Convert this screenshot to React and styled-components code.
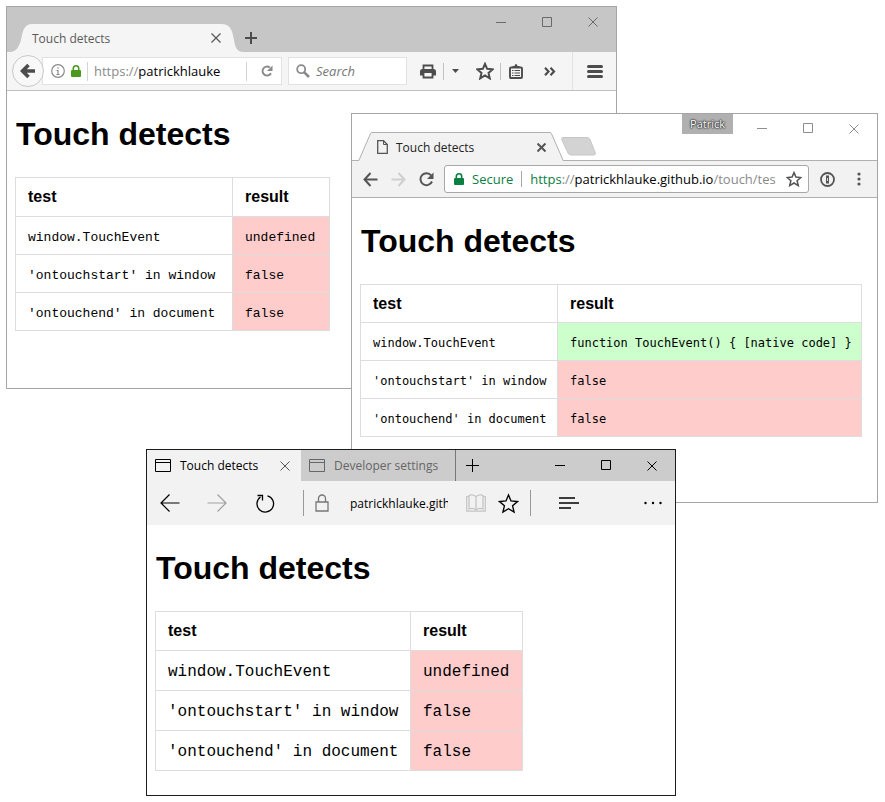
import React from "react";
import styled, { createGlobalStyle, css } from "styled-components";

const GlobalStyle = createGlobalStyle`
  * { box-sizing: border-box; }
  body { margin: 0; background: #fff; color: #000; font-family: "Open Sans", sans-serif; }
  svg { display: block; flex: none; }
`;

const Desktop = styled.main`
  position: relative;
  min-height: 100vh;
  overflow: hidden;
`;

const Frame = styled.section`
  position: absolute;
  left: ${(p) => p.$x}px;
  top: ${(p) => p.$y}px;
  width: ${(p) => p.$w}px;
  min-height: ${(p) => p.$h}px;
  border: 1px solid ${(p) => p.$edge};
  background: #fff;
`;

const IconButton = styled.button`
  display: flex;
  flex: none;
  align-items: center;
  justify-content: center;
  width: ${(p) => p.$w || 24}px;
  height: ${(p) => p.$h || 28}px;
  padding: 0;
  border: 0;
  background: none;
  color: ${(p) => p.$color || "inherit"};
`;

const Spacer = styled.div`
  flex: 1;
`;

const Divider = styled.span`
  flex: none;
  width: 1px;
  height: ${(p) => p.$h}px;
  margin: ${(p) => p.$m || "0"};
  background: ${(p) => p.$color};
`;

const TextInput = styled.input`
  min-width: 0;
  padding: 0;
  border: 0;
  outline: 0;
  background: none;
  color: #000;
  font: inherit;
  ${(p) => (p.$fit ? css`flex: none; field-sizing: content;` : css`flex: 1; width: 0;`)}
`;

const Controls = styled.div`
  display: flex;
  color: ${(p) => p.$color};
`;

/* ---------- page shown in every browser ---------- */

const Page = styled.div`
  padding: 25px 8px 16px;
`;

const Title = styled.h1`
  margin: 0 0 24px;
  padding-left: 1px;
  font: bold 32px/37px "Liberation Sans", sans-serif;
`;

const ResultTable = styled.table`
  border-collapse: collapse;
`;

const Head = styled.th`
  min-width: ${(p) => p.$min || 0}px;
  padding: 9px 12px;
  border: 1px solid #ddd;
  text-align: left;
  font: bold 16px/${(p) => p.$line}px "Liberation Sans", sans-serif;
`;

const tones = { pass: "#cfc", fail: "#fcc" };

const Cell = styled.td`
  padding: 11px 8px 7px 12px;
  border: 1px solid #ddd;
  background: ${(p) => tones[p.$tone] || "transparent"};
  font: ${(p) => p.$size}px/${(p) => p.$line}px ${(p) => p.$face}, monospace;
  white-space: nowrap;
`;

function TestPage({ touchEvent, tone, face, size, headLine, line, min }) {
  const rows = [
    ["window.TouchEvent", touchEvent, tone],
    ["'ontouchstart' in window", "false", "fail"],
    ["'ontouchend' in document", "false", "fail"],
  ];
  const text = { $face: face, $size: size, $line: line };
  return (
    <Page>
      <Title>Touch detects</Title>
      <ResultTable>
        <thead>
          <tr>
            <Head scope="col" $line={headLine} $min={min[0]}>test</Head>
            <Head scope="col" $line={headLine} $min={min[1]}>result</Head>
          </tr>
        </thead>
        <tbody>
          {rows.map(([test, result, kind]) => (
            <tr key={test}>
              <Cell {...text}>{test}</Cell>
              <Cell {...text} $tone={kind}>{result}</Cell>
            </tr>
          ))}
        </tbody>
      </ResultTable>
    </Page>
  );
}

/* ---------- shared drawings ---------- */

const Svg = ({ w, h = w, children, ...rest }) => (
  <svg width={w} height={h} viewBox={`0 0 ${w} ${h}`} fill="none" stroke="currentColor" aria-hidden="true" {...rest}>
    {children}
  </svg>
);

const MinimizeIcon = () => <Svg w={11}><path d="M0 5.500H10" /></Svg>;
const MaximizeIcon = () => <Svg w={11}><path d="M.5 .5H9.500V9.500H.5Z" /></Svg>;
const CloseIcon = ({ w = 11, sw = 1 }) => (
  <Svg w={w}><path strokeWidth={sw} d={`M.5 .5L${w - 0.5} ${w - 0.5}M${w - 0.5} .5L.5 ${w - 0.5}`} /></Svg>
);
const PadlockIcon = () => (
  <Svg w={10} h={12}>
    <path d="M2.300 6V3.500a2.700 2.700 0 0 1 5.400 0V6" strokeWidth="1.600" />
    <path d="M1 5H9Q10 5 10 6V11Q10 12 9 12H1Q0 12 0 11V6Q0 5 1 5Z" fill="currentColor" stroke="none" />
  </Svg>
);
const StarIcon = ({ w, sw }) => (
  <svg width={w} height={w} viewBox="0 0 20 20" fill="none" stroke="currentColor" strokeWidth={sw} aria-hidden="true">
    <path d="M10 2L12.400 7.600L18.500 8.200L13.900 12.200L15.300 18.200L10 15L4.700 18.200L6.100 12.200L1.500 8.200L7.600 7.600Z" />
  </svg>
);

function WindowControls({ color, h }) {
  return (
    <Controls $color={color}>
      <IconButton $w={46} $h={h} aria-label="Minimize"><MinimizeIcon /></IconButton>
      <IconButton $w={46} $h={h} aria-label="Maximize"><MaximizeIcon /></IconButton>
      <IconButton $w={46} $h={h} aria-label="Close window"><CloseIcon w={10} /></IconButton>
    </Controls>
  );
}

/* ---------- Firefox ---------- */

const FoxTitleBar = styled.header`
  display: flex;
  height: 45px;
  background: #c6c6c6;
`;

const FoxTab = styled.div`
  display: flex;
  align-self: flex-end;
  height: 28px;
  color: #f5f5f5;
`;

const FoxTabBody = styled.div`
  display: flex;
  align-items: center;
  justify-content: space-between;
  width: 189px;
  background: #f5f5f5;
  color: #5a5a5a;
  font-size: 12px;
`;

const FoxToolbar = styled.div`
  display: flex;
  align-items: center;
  height: 39px;
  padding: 0 9px 0 5px;
  border-bottom: 1px solid #c0c0c0;
  background: #f5f5f5;
  color: #4c4c4c;
`;

const FoxBack = styled.button`
  z-index: 1;
  display: flex;
  flex: none;
  align-items: center;
  justify-content: center;
  width: 32px;
  height: 32px;
  padding: 0;
  border: 1px solid #c8c8c8;
  border-radius: 50%;
  background: #f8f8f8;
  color: #4c4c4c;
`;

const FoxField = styled.div`
  display: flex;
  flex: none;
  align-items: center;
  width: ${(p) => p.$w}px;
  height: 28px;
  margin-left: ${(p) => p.$ml}px;
  padding-left: ${(p) => p.$pl}px;
  border: 1px solid #e2e2e2;
  background: #fff;
  font-size: 13px;
  gap: 6px;
  color: #8a8a8a;

  input::placeholder { color: #777; font-style: italic; opacity: 1; }
`;

const UrlText = styled.label`
  display: flex;
  flex: 1;
  min-width: 0;
  align-items: center;
  overflow: hidden;
  white-space: nowrap;
  color: #8a8a8a;
`;

const Tint = styled.span`
  color: ${(p) => p.$color};
`;

const FoxTools = styled.div`
  display: flex;
  flex: 1;
  align-items: center;
  justify-content: space-between;
  margin-left: 9px;
`;

const FoxToolGroup = styled.div`
  display: flex;
  align-items: center;
  gap: 3px;
`;

function Firefox() {
  return (
    <Frame $x={6} $y={6} $w={611} $h={383} $edge="#a5a5a5" aria-label="Firefox">
      <FoxTitleBar>
        <FoxTab>
          <Svg w={25} h={28}><path fill="currentColor" stroke="none" d="M0 28H3C9 28 12 23 14 16C16 5 18 0 25 0V28Z" /></Svg>
          <FoxTabBody>
            Touch detects
            <IconButton $w={10} aria-label="Close tab"><CloseIcon w={10} sw={1.3} /></IconButton>
          </FoxTabBody>
          <Svg w={25} h={28}><path fill="currentColor" stroke="none" d="M25 28H22C16 28 14 23 13 16C11 5 9 0 0 0V28Z" /></Svg>
          <IconButton $w={10} $color="#4c4c4c" aria-label="New tab">
            <Svg w={12}><path d="M6 0V12M0 6H12" strokeWidth="2" /></Svg>
          </IconButton>
        </FoxTab>
        <Spacer />
        <WindowControls color="#6a6a6a" h={30} />
      </FoxTitleBar>
      <FoxToolbar>
        <FoxBack aria-label="Back">
          <Svg w={16}><path d="M8.500 2L2.500 8L8.500 14M3.500 8H15" strokeWidth="3.600" /></Svg>
        </FoxBack>
        <FoxField $w={240} $ml={-2} $pl={8}>
          <Svg w={14}>
            <circle cx="7" cy="7" r="6.300" strokeWidth="1.200" />
            <path d="M7 6V11M7 3.200V4.800M5.500 6.500H7M5.500 10.500H8.500" strokeWidth="1.200" />
          </Svg>
          <Tint $color="#4b9a20"><PadlockIcon /></Tint>
          <Divider $h={19} $color="#d5d5d5" />
          <UrlText>
            https://
            <TextInput defaultValue="patrickhlauke" aria-label="Firefox address" />
          </UrlText>
          <Divider $h={19} $color="#d5d5d5" />
          <IconButton $w={28} $h={24} aria-label="Reload">
            <Svg w={12}>
              <path d="M8.800 2.500A4.500 4.500 0 1 0 10 8.200" strokeWidth="1.900" />
              <path d="M11.500 .5V6H6Z" fill="currentColor" stroke="none" />
            </Svg>
          </IconButton>
        </FoxField>
        <FoxField $w={119} $ml={6} $pl={7}>
          <Svg w={14}>
            <circle cx="5.200" cy="5.200" r="4" strokeWidth="1.800" />
            <path d="M8.300 8.300L13 13" strokeWidth="2.600" />
          </Svg>
          <TextInput placeholder="Search" aria-label="Search" />
        </FoxField>
        <FoxTools>
          <FoxToolGroup>
            <IconButton aria-label="Print">
              <Svg w={16} h={15}>
                <path d="M3.500 6V1.500H12.500V6" strokeWidth="1.800" />
                <path d="M2.500 5H13.500Q16 5 16 7.500V11.500H13V9H3V11.500H0V7.500Q0 5 2.500 5Z" fill="currentColor" stroke="none" />
                <path d="M3.500 9V13.500H12.500V9" strokeWidth="1.800" />
              </Svg>
            </IconButton>
            <Divider $h={17} $color="#c4c4c4" />
            <IconButton $w={16} aria-label="Print options">
              <Svg w={7} h={4}><path d="M0 0H7L3.500 4Z" fill="currentColor" stroke="none" /></Svg>
            </IconButton>
          </FoxToolGroup>
          <FoxToolGroup>
            <IconButton aria-label="Bookmark this page"><StarIcon w={18} sw={2.2} /></IconButton>
            <Divider $h={17} $color="#c4c4c4" />
            <IconButton aria-label="Show bookmarks">
              <Svg w={14} h={15}>
                <path d="M2 3.500H12Q13 3.500 13 4.500V13Q13 14 12 14H2Q1 14 1 13V4.500Q1 3.500 2 3.500Z" strokeWidth="1.900" />
                <path d="M3.500 4V2H5.500Q6 0 7 0Q8 0 8.500 2H10.500V4Z" fill="currentColor" stroke="none" />
                <path d="M3 6.500H4.500M5.500 6.500H11M3 9H4.500M5.500 9H11M3 11.500H4.500M5.500 11.500H11" strokeWidth="1.200" />
              </Svg>
            </IconButton>
          </FoxToolGroup>
          <IconButton aria-label="More tools">
            <Svg w={12} h={9}><path d="M1 .8L4.500 4.500L1 8.200M6.500 .8L10 4.500L6.500 8.200" strokeWidth="2.200" /></Svg>
          </IconButton>
          <Divider $h={38} $color="#e2e2e2" />
          <IconButton aria-label="Open menu">
            <Svg w={16} h={13}><path d="M1.500 1.500H14.500M1.500 6.500H14.500M1.500 11.500H14.500" strokeWidth="3" strokeLinecap="round" /></Svg>
          </IconButton>
        </FoxTools>
      </FoxToolbar>
      <TestPage touchEvent="undefined" tone="fail" face='"Liberation Mono"' size={13} headLine={20} line={19} min={[217, 97]} />
    </Frame>
  );
}

/* ---------- Chrome ---------- */

const ChromeTitleBar = styled.header`
  display: flex;
  height: 47px;
  padding-left: 6px;
  border-bottom: 1px solid #b0b0b0;
`;

const ChromeTab = styled.div`
  display: flex;
  align-self: flex-end;
  height: 29px;
  margin-bottom: -1px;
`;

const ChromeTabBody = styled.div`
  display: flex;
  align-items: center;
  width: 178px;
  padding-left: 5px;
  border-top: 1px solid #b0b0b0;
  background: #f2f2f2;
  color: #222;
  font-size: 12px;
  gap: 8px;
`;

const ProfileBadge = styled.button`
  align-self: flex-start;
  height: 20px;
  margin-right: 6px;
  padding: 0 8px;
  border: 0;
  background: #b0b0b0;
  color: #fff;
  font: 11px/20px "Open Sans", sans-serif;
  text-shadow: 0 0 2px #222, 0 0 2px #222, 0 0 1px #222;
`;

const ChromeToolbar = styled.div`
  display: flex;
  align-items: center;
  height: 37px;
  padding: 0 4px;
  border-bottom: 1px solid #b0b0b0;
  background: #f2f2f2;
  color: #555;
`;

const Omnibox = styled.div`
  display: flex;
  flex: 1;
  align-items: center;
  height: 28px;
  min-width: 0;
  margin: 0 4px;
  padding: 0 7px 0 9px;
  border: 1px solid #a8a8a8;
  border-radius: 3px;
  background: #fff;
  color: #0b8043;
  font-size: 13px;
  gap: 8px;
`;

const ChromeActions = styled.div`
  display: flex;
  gap: 4px;
`;

function Chrome() {
  return (
    <Frame $x={351} $y={113} $w={527} $h={390} $edge="#a5a5a5" aria-label="Chrome">
      <ChromeTitleBar>
        <ChromeTab>
          <Svg w={14} h={29}>
            <path d="M0 29V28.500H1L13 .5H14V29Z" fill="#f2f2f2" stroke="none" />
            <path d="M0 28.500H.8L12.700 1.200Q13 .5 14 .5" stroke="#b0b0b0" />
          </Svg>
          <ChromeTabBody>
            <Svg w={11} h={14} stroke="#555">
              <path d="M.7 .7H6.500L10.300 4.500V13.300H.7Z" strokeWidth="1.300" />
              <path d="M6.500 .7V4.500H10.300" />
            </Svg>
            Touch detects
            <Spacer />
            <IconButton $w={18} $color="#555" aria-label="Close tab"><CloseIcon w={9} sw={2} /></IconButton>
          </ChromeTabBody>
          <Svg w={14} h={29}>
            <path d="M14 29V28.500H13L1 .5H0V29Z" fill="#f2f2f2" stroke="none" />
            <path d="M14 28.500H13.200L1.300 1.200Q1 .5 0 .5" stroke="#b0b0b0" />
          </Svg>
          <IconButton $w={30} aria-label="New tab">
            <Svg w={36} h={19}><path d="M2 .5H26Q28 .5 29 2.500L34 15Q35 18 33 18H10Q8 18 7 16L1 3Q0 .5 2 .5Z" fill="#d3d3d3" stroke="#c6c6c6" /></Svg>
          </IconButton>
        </ChromeTab>
        <Spacer />
        <ProfileBadge>Patrick</ProfileBadge>
        <WindowControls color="#8e8e8e" h={29} />
      </ChromeTitleBar>
      <ChromeToolbar>
        <IconButton $w={28} aria-label="Back">
          <Svg w={15}><path d="M7.500 1L1.500 7.500L7.500 14M1.500 7.500H14.500" strokeWidth="2" /></Svg>
        </IconButton>
        <IconButton $w={28} $color="#cfcfcf" aria-label="Forward">
          <Svg w={15}><path d="M7.500 1L13.500 7.500L7.500 14M13.500 7.500H.5" strokeWidth="2" /></Svg>
        </IconButton>
        <IconButton $w={28} aria-label="Reload">
          <Svg w={15}>
            <path d="M12.200 3.500A6 6 0 1 0 13 9.500" strokeWidth="2" />
            <path d="M14.500 .5V7H8Z" fill="currentColor" stroke="none" />
          </Svg>
        </IconButton>
        <Omnibox>
          <PadlockIcon />
          Secure
          <Divider $h={16} $color="#a8a8a8" />
          <UrlText>
            <Tint $color="#0b8043">https</Tint>://
            <TextInput $fit defaultValue="patrickhlauke.github.io" aria-label="Chrome address" />
            /touch/tes
          </UrlText>
          <IconButton $w={14} $color="#555" aria-label="Bookmark this page"><StarIcon w={16} sw={1.9} /></IconButton>
        </Omnibox>
        <ChromeActions>
          <IconButton $w={28} aria-label="1Password">
            <Svg w={15}>
              <circle cx="7.500" cy="7.500" r="6.500" strokeWidth="1.800" />
              <path d="M7.500 3.500V11.500" strokeWidth="3" />
              <path d="M7.500 6V9" stroke="#ddd" />
            </Svg>
          </IconButton>
          <IconButton $w={28} aria-label="Customize and control">
            <Svg w={4} h={14} fill="currentColor" stroke="none">
              <circle cx="2" cy="2" r="1.600" /><circle cx="2" cy="7" r="1.600" /><circle cx="2" cy="12" r="1.600" />
            </Svg>
          </IconButton>
        </ChromeActions>
      </ChromeToolbar>
      <TestPage
        touchEvent="function TouchEvent() { [native code] }"
        tone="pass"
        face='"DejaVu Sans Mono"'
        size={12}
        headLine={19}
        line={19}
        min={[197, 304]}
      />
    </Frame>
  );
}

/* ---------- Edge ---------- */

const EdgeTitleBar = styled.header`
  display: flex;
  height: 31px;
  background: #ccc;
`;

const EdgeTab = styled.div`
  display: flex;
  flex: none;
  align-items: center;
  width: ${(p) => (p.$active ? 154 : 155)}px;
  padding: 0 8px;
  border-right: ${(p) => (p.$active ? 0 : 1)}px solid #777;
  background: ${(p) => (p.$active ? "#f2f2f2" : "#ccc")};
  color: ${(p) => (p.$active ? "#000" : "#666")};
  font-size: 12px;
  gap: 9px;
  white-space: nowrap;
`;

const EdgeToolbar = styled.div`
  display: flex;
  align-items: center;
  height: 44px;
  padding-right: 6px;
  background: #f2f2f2;
  font-size: 12px;
`;

const EdgeAddress = styled.label`
  display: flex;
  flex: none;
  width: 98px;
  margin: 0 12px 0 10px;
  overflow: hidden;
`;

const TabPageIcon = () => (
  <Svg w={16} h={13}><path d="M.5 .5H15.500V12.500H.5ZM.5 3.500H15.500" /></Svg>
);

function Edge() {
  return (
    <Frame $x={146} $y={449} $w={530} $h={347} $edge="#1c1c1c" aria-label="Edge">
      <EdgeTitleBar>
        <EdgeTab $active>
          <TabPageIcon />
          Touch detects
          <Spacer />
          <IconButton $w={16} $color="#555" aria-label="Close tab"><CloseIcon w={10} /></IconButton>
        </EdgeTab>
        <EdgeTab>
          <TabPageIcon />
          Developer settings
        </EdgeTab>
        <IconButton $w={32} $h={31} aria-label="New tab">
          <Svg w={13}><path d="M6.500 0V13M0 6.500H13" /></Svg>
        </IconButton>
        <Spacer />
        <WindowControls color="#000" h={31} />
      </EdgeTitleBar>
      <EdgeToolbar>
        <IconButton $w={46} aria-label="Back">
          <Svg w={20} h={18}><path d="M9.500 .5L1 9L9.500 17.500M1 9H19.500" strokeWidth="1.200" /></Svg>
        </IconButton>
        <IconButton $w={48} $color="#a0a0a0" aria-label="Forward">
          <Svg w={20} h={18}><path d="M10.500 .5L19 9L10.500 17.500M19 9H.5" strokeWidth="1.200" /></Svg>
        </IconButton>
        <IconButton $w={48} aria-label="Refresh">
          <Svg w={20} h={19}>
            <path d="M12.500 1.800A8.300 8.300 0 1 1 5.500 3" strokeWidth="1.300" />
            <path d="M2.500 1.500H7.500V6.500" strokeWidth="1.300" />
          </Svg>
        </IconButton>
        <Divider $h={26} $color="#999" $m="0 0 0 14px" />
        <IconButton $w={36} $color="#777" aria-label="Site information">
          <Svg w={14} h={18}><path d="M1 8H13V17H1ZM3.500 8V4.500a3.500 3.500 0 0 1 7 0V8" strokeWidth="1.300" /></Svg>
        </IconButton>
        <EdgeAddress>
          <TextInput $fit defaultValue="patrickhlauke.github.io" aria-label="Edge address" />
        </EdgeAddress>
        <IconButton $w={32} $color="#c4c4c4" aria-label="Reading view">
          <Svg w={20} h={18}>
            <path d="M10 2.500Q6 0 3 1.500V15Q7 13.500 10 16Q13 13.500 17 15V1.500Q14 0 10 2.500V16" strokeWidth="1.300" />
            <path d="M2.500 2.500H.7V17.200H19.300V2.500H17.500" strokeWidth="1.200" />
          </Svg>
        </IconButton>
        <IconButton $w={32} aria-label="Add to favorites"><StarIcon w={21} sw={1.3} /></IconButton>
        <Divider $h={26} $color="#999" $m="0 18px 0 6px" />
        <IconButton $w={40} aria-label="Hub">
          <Svg w={20} h={12}><path d="M0 1H16M0 6H20M0 11H12" strokeWidth="1.400" /></Svg>
        </IconButton>
        <Spacer />
        <IconButton $w={32} aria-label="More">
          <Svg w={18} h={4} fill="currentColor" stroke="none">
            <circle cx="1.500" cy="2" r="1.200" /><circle cx="9" cy="2" r="1.200" /><circle cx="16.500" cy="2" r="1.200" />
          </Svg>
        </IconButton>
      </EdgeToolbar>
      <TestPage touchEvent="undefined" tone="fail" face='"Liberation Mono"' size={16} headLine={20} line={21} min={[255, 112]} />
    </Frame>
  );
}

export default function App() {
  return (
    <>
      <GlobalStyle />
      <Desktop>
        <Firefox />
        <Chrome />
        <Edge />
      </Desktop>
    </>
  );
}
